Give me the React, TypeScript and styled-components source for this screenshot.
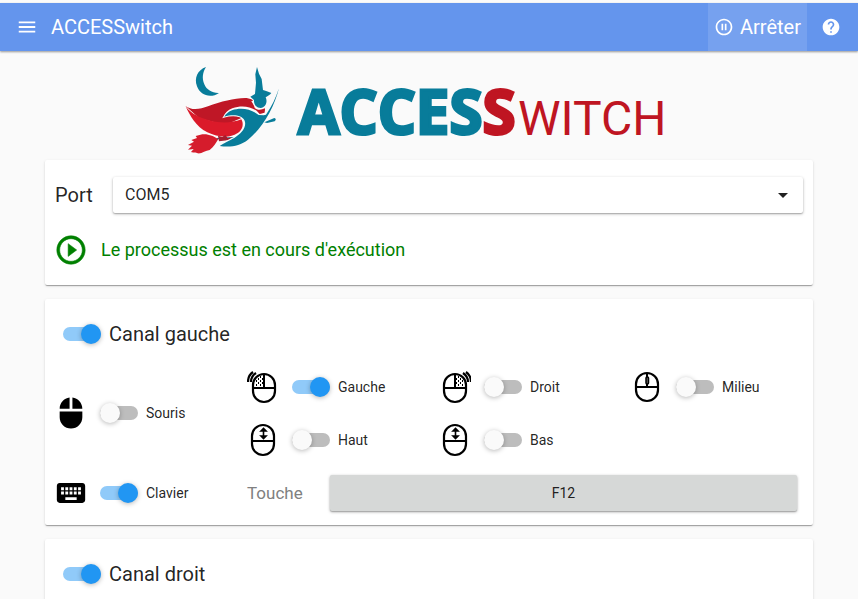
import React, { useState } from "react";
import styled, { createGlobalStyle } from "styled-components";

const GlobalStyle = createGlobalStyle`
  * { box-sizing: border-box; }
  body {
    margin: 0;
    background: #fafafa;
    color: rgba(0, 0, 0, 0.87);
    font-family: Roboto, "Liberation Sans", sans-serif;
  }
  html { scrollbar-width: none; }
  button, select { font-family: inherit; }
`;

const Page = styled.div`
  padding-top: 3px;
`;

const Toolbar = styled.header`
  display: flex;
  align-items: stretch;
  height: 48px;
  padding-left: 16px;
  background: #6495ed;
  color: #fff;
  box-shadow: 0 1px 2px rgba(0, 0, 0, 0.4);
`;

const ToolButton = styled.button<{ $raised?: boolean }>`
  display: flex;
  align-items: center;
  gap: 6px;
  border: 0;
  padding: 0 6px;
  background: ${(p) => (p.$raised ? "rgba(255, 255, 255, 0.12)" : "transparent")};
  color: inherit;
  font-size: 20px;
  cursor: pointer;
`;

const MenuButton = styled(ToolButton)`
  padding: 0;
`;

const HelpButton = styled(ToolButton)`
  padding: 0 17px 0 14px;
`;

const AppTitle = styled.h1`
  flex: 1;
  align-self: center;
  margin: 0 0 0 13px;
  font-size: 20px;
  font-weight: 400;
`;

const LogoArea = styled.div`
  display: flex;
  justify-content: center;
  padding-top: 4px;
`;

const Content = styled.main`
  display: flex;
  flex-direction: column;
  gap: 14px;
  padding: 0 45px;
`;

const Card = styled.section`
  background: #fff;
  border-radius: 2px;
  box-shadow: 0 2px 1px -1px rgba(0, 0, 0, 0.2), 0 1px 1px rgba(0, 0, 0, 0.14),
    0 1px 3px rgba(0, 0, 0, 0.12);
`;

const PortCard = styled(Card)`
  padding: 7px 10px 8px 9px;
`;

const PortRow = styled.div`
  display: flex;
  align-items: center;
  height: 55px;
`;

const PortLabel = styled.label`
  width: 59px;
  padding-left: 1px;
  font-size: 20px;
`;

const SelectBox = styled.div`
  flex: 1;
  display: grid;
  align-items: center;
  height: 36px;
  background: #fff;
  border-radius: 2px;
  box-shadow: 0 1px 3px rgba(0, 0, 0, 0.3), 0 1px 1px rgba(0, 0, 0, 0.14);

  > * { grid-area: 1 / 1; }
  > svg { justify-self: end; margin-right: 8px; pointer-events: none; }
`;

const PortSelect = styled.select`
  appearance: none;
  width: 100%;
  height: 36px;
  padding: 0 12px;
  border: 0;
  background: transparent;
  color: inherit;
  font-size: 16px;
`;

const Status = styled.p`
  display: flex;
  align-items: center;
  gap: 13px;
  height: 55px;
  margin: 0;
  color: #008000;
  font-size: 18px;
`;

const ChannelCard = styled(Card)`
  padding: 8px 0 6px;
`;

const ChannelHead = styled.div`
  display: flex;
  align-items: center;
  height: 53px;
  padding-left: 18px;
`;

const ChannelRow = styled.div`
  display: grid;
  grid-template-columns: 1fr 3fr;
  align-items: center;
`;

const Actions = styled.div`
  display: grid;
  grid-template-columns: repeat(3, 1fr);
`;

const Option = styled.div`
  display: flex;
  align-items: center;
  gap: 13px;
  height: 53px;
  padding-left: 10px;
`;

const SourceOption = styled(Option)`
  gap: 12px;
  padding-left: 9px;
`;

const SwitchLabel = styled.label<{ $large?: boolean }>`
  display: flex;
  align-items: center;
  gap: 8px;
  font-size: ${(p) => (p.$large ? 20 : 14)}px;
  cursor: pointer;
`;

const SwitchInput = styled.input`
  appearance: none;
  display: grid;
  align-items: center;
  width: 38px;
  height: 20px;
  margin: 0;
  cursor: pointer;

  &::before, &::after { content: ""; grid-area: 1 / 1; }
  &::before {
    height: 14px;
    border-radius: 7px;
    background: #bdbdbd;
  }
  &::after {
    width: 20px;
    height: 20px;
    border-radius: 50%;
    background: #fafafa;
    box-shadow: 0 1px 5px rgba(0, 0, 0, 0.28);
  }
  &:checked::before { background: #90caf9; }
  &:checked::after { background: #2196f3; justify-self: end; }
`;

const KeyRow = styled.div`
  display: flex;
  align-items: center;
  padding: 0 16px 0 10px;
`;

const KeyLabel = styled.label`
  width: 83px;
  color: #808080;
  font-size: 17px;
`;

const KeyButton = styled.button`
  flex: 1;
  height: 36px;
  border: 0;
  border-radius: 2px;
  background: #d6d8d7;
  color: inherit;
  font-size: 14px;
  box-shadow: 0 1px 3px rgba(0, 0, 0, 0.35), 0 1px 1px rgba(0, 0, 0, 0.14);
  cursor: pointer;
`;

const Logo = () => (
  <svg width="488" height="105" viewBox="0 0 488 105" role="img" aria-label="ACCESSwitch">
    <g transform="translate(-10 0) scale(0.3333)" paintOrder="stroke">
      <path fill="#087c9a" d="M93 36C67 45 57 70 66 94C75 120 106 132 132 114C112 115 95 105 88 88C80 70 83 52 93 36Z" />
      <path fill="#bf1726" d="M31 152C50 168 76 162 99 154C140 139 180 128 215 129L238 135L229 139C234 146 237 151 239 158C246 166 258 166 270 160L268 173L254 176L246 168C224 153 198 151 172 160C158 165 150 175 146 184C165 181 190 181 201 188L150 210L73 190Z" />
      <path fill="#db1a2a" d="M32 154C48 177 75 189 107 197C137 204 168 205 199 193C207 205 204 226 187 235C164 251 127 247 97 232C63 215 45 183 32 154Z" />
      <path fill="none" stroke="#087c9a" strokeWidth="4" d="M126 251L190 247" />
      <path fill="#a41d2e" d="M129 242L142 246L151 240L158 249L170 247L164 255L132 259Z" />
      <path fill="#d51c2c" d="M82 238C96 235 119 244 130 252C123 263 118 274 104 285C91 286 80 297 68 295C64 290 52 294 48 291L56 282L39 284L51 272L39 270L57 260L49 255L66 249L62 243Z" />
      <path fill="#087c9a" stroke="#fafafa" strokeWidth="6" d="M312 100C302 129 291 154 273 179L266 181L251 180C228 161 196 157 171 166C159 171 152 178 148 185C172 178 201 179 209 197C216 218 198 236 179 248C162 257 146 264 134 273C166 278 195 273 219 254C264 218 297 158 312 100Z" />
      <path fill="#087c9a" d="M268 202L298 189Q306 192 299 199L276 204Z" />
      <path fill="#087c9a" stroke="#fafafa" strokeWidth="6" d="M246 36L252 56L260 72L264 105C274 108 282 111 289 114C284 120 277 124 272 127C279 141 271 157 257 159C243 158 236 148 237 135L226 125L240 117L243 83L241 58Z" />
      <path fill="#bf1726" d="M247 168Q257 169 270 161L268 173L254 176Z" />
    </g>
    <text x="113" y="79" fill="#087c9a" stroke="#087c9a" strokeWidth="3" fontFamily='"Open Sans", sans-serif' fontWeight="700" fontSize="60">
      ACCES<tspan fill="#bf1522" stroke="#bf1522">S</tspan>
    </text>
    <text x="333" y="80" fill="#bf1522" fontFamily="Roboto, sans-serif" fontSize="48">WITCH</text>
  </svg>
);

const MaterialIcon = ({ d, size, fill = "currentColor", weight = 0 }: { d: string; size: number; fill?: string; weight?: number }) => (
  <svg width={size} height={size} viewBox="0 0 24 24" fill={fill} stroke={weight ? fill : "none"} strokeWidth={weight} aria-hidden="true">
    <path d={d} />
  </svg>
);

const icons = {
  menu: "M3 18h18v-2H3v2zm0-5h18v-2H3v2zm0-7v2h18V6H3z",
  pause: "M9 16h2V8H9v8zm3-14C6.48 2 2 6.48 2 12s4.480 10 10 10 10-4.480 10-10S17.520 2 12 2zm0 18c-4.410 0-8-3.590-8-8s3.590-8 8-8 8 3.590 8 8-3.590 8-8 8zm1-4h2V8h-2v8z",
  help: "M12 2C6.480 2 2 6.480 2 12s4.480 10 10 10 10-4.480 10-10S17.520 2 12 2zm1 17h-2v-2h2v2zm2.070-7.750l-.9.920C13.450 12.900 13 13.500 13 15h-2v-.5c0-1.100.450-2.100 1.170-2.830l1.240-1.260c.370-.360.590-.860.590-1.410 0-1.100-.9-2-2-2s-2 .9-2 2H8c0-2.210 1.790-4 4-4s4 1.790 4 4c0 .880-.360 1.680-.930 2.250z",
  play: "M10 16.500l6-4.500-6-4.500v9zM12 2C6.480 2 2 6.480 2 12s4.480 10 10 10 10-4.480 10-10S17.520 2 12 2zm0 18c-4.410 0-8-3.590-8-8s3.590-8 8-8 8 3.590 8 8-3.590 8-8 8z",
  mouse: "M13 1.070V9h7c0-4.080-3.050-7.440-7-7.930zM4 15c0 4.420 3.580 8 8 8s8-3.580 8-8v-4H4v4zm7-13.930C7.050 1.560 4 4.920 4 9h7V1.070z",
  keyboard: "M20 5H4c-1.100 0-1.990.9-1.990 2L2 17c0 1.100.9 2 2 2h16c1.100 0 2-.9 2-2V7c0-1.100-.9-2-2-2zm-9 3h2v2h-2V8zm0 3h2v2h-2v-2zM8 8h2v2H8V8zm0 3h2v2H8v-2zm-1 2H5v-2h2v2zm0-3H5V8h2v2zm9 7H8v-2h8v2zm0-4h-2v-2h2v2zm0-3h-2V8h2v2zm3 3h-2v-2h2v2zm0-3h-2V8h2v2z",
  arrow: "M7 10l5 5 5-5z",
};

type MouseKind = "left" | "right" | "middle" | "scroll";

const MouseIcon = ({ kind }: { kind: MouseKind }) => (
  <svg width="32" height="34" viewBox="0 0 32 34" fill="none" stroke="#000" aria-hidden="true">
    {kind === "left" || kind === "right" ? (
      <g transform={kind === "right" ? "translate(33 0) scale(-1 1)" : undefined}>
        <rect x="6" y="4" width="22" height="28" rx="11" strokeWidth="2.200" />
        <path d="M6 18H28M17 4V18" strokeWidth="2" />
        <path d="M13 7h1M11 9h1M15 9h1M9 11h1M13 11h1M11 13h1M15 13h1M9 15h1M13 15h1" strokeWidth="1.800" />
        <path d="M1 12C1 8 3 4 6 2M4 12C4 9 6 5 9 3" strokeWidth="2.200" />
      </g>
    ) : (
      <>
        <rect x="5" y={kind === "middle" ? 3 : 2} width="22" height={kind === "middle" ? 28 : 30} rx="11" strokeWidth="2.200" />
        <path d={kind === "middle" ? "M5 17H27M16 3V17" : "M5 18H27"} strokeWidth="2" />
        {kind === "middle" && <rect x="15" y="7" width="2.500" height="7" rx="1" fill="#666" strokeWidth="1.500" />}
        {kind === "scroll" && <path d="M16.500 7V14M14 8L16.500 5.500L19 8ZM14 13L16.500 15.500L19 13Z" fill="#000" strokeWidth="1.600" />}
      </>
    )}
  </svg>
);

const Toggle = ({ label, on = false, large }: { label: string; on?: boolean; large?: boolean }) => {
  const [checked, setChecked] = useState(on);
  return (
    <SwitchLabel $large={large}>
      <SwitchInput type="checkbox" role="switch" checked={checked} onChange={(e) => setChecked(e.target.checked)} />
      {label}
    </SwitchLabel>
  );
};

const actions: { label: string; kind: MouseKind; on?: boolean }[] = [
  { label: "Gauche", kind: "left", on: true },
  { label: "Droit", kind: "right" },
  { label: "Milieu", kind: "middle" },
  { label: "Haut", kind: "scroll" },
  { label: "Bas", kind: "scroll" },
];

const ChannelHeading = ({ title }: { title: string }) => (
  <ChannelHead>
    <Toggle label={title} on large />
  </ChannelHead>
);

const ChannelSettings = ({ id }: { id: string }) => (
  <>
    <ChannelRow>
      <SourceOption>
        <MaterialIcon d={icons.mouse} size={34} fill="#000" />
        <Toggle label="Souris" />
      </SourceOption>
      <Actions>
        {actions.map((a) => (
          <Option key={a.label}>
            <MouseIcon kind={a.kind} />
            <Toggle label={a.label} on={a.on} />
          </Option>
        ))}
      </Actions>
    </ChannelRow>
    <ChannelRow>
      <SourceOption>
        <MaterialIcon d={icons.keyboard} size={34} fill="#000" />
        <Toggle label="Clavier" on />
      </SourceOption>
      <KeyRow>
        <KeyLabel htmlFor={`${id}-key`}>Touche</KeyLabel>
        <KeyButton id={`${id}-key`} type="button">F12</KeyButton>
      </KeyRow>
    </ChannelRow>
  </>
);

export default function App() {
  return (
    <Page>
      <GlobalStyle />
      <Toolbar>
        <MenuButton type="button" aria-label="Menu">
          <MaterialIcon d={icons.menu} size={22} />
        </MenuButton>
        <AppTitle>ACCESSwitch</AppTitle>
        <ToolButton type="button" $raised>
          <MaterialIcon d={icons.pause} size={20} />
          Arrêter
        </ToolButton>
        <HelpButton type="button" aria-label="Aide">
          <MaterialIcon d={icons.help} size={20} />
        </HelpButton>
      </Toolbar>
      <LogoArea>
        <Logo />
      </LogoArea>
      <Content>
        <PortCard>
          <PortRow>
            <PortLabel htmlFor="port">Port</PortLabel>
            <SelectBox>
              <PortSelect id="port" defaultValue="COM5">
                <option>COM5</option>
              </PortSelect>
              <MaterialIcon d={icons.arrow} size={24} />
            </SelectBox>
          </PortRow>
          <Status>
            <MaterialIcon d={icons.play} size={34} weight={0.4} />
            Le processus est en cours d'exécution
          </Status>
        </PortCard>
        <ChannelCard>
          <ChannelHeading title="Canal gauche" />
          <ChannelSettings id="left" />
        </ChannelCard>
        <ChannelCard>
          <ChannelHeading title="Canal droit" />
        </ChannelCard>
      </Content>
    </Page>
  );
}
